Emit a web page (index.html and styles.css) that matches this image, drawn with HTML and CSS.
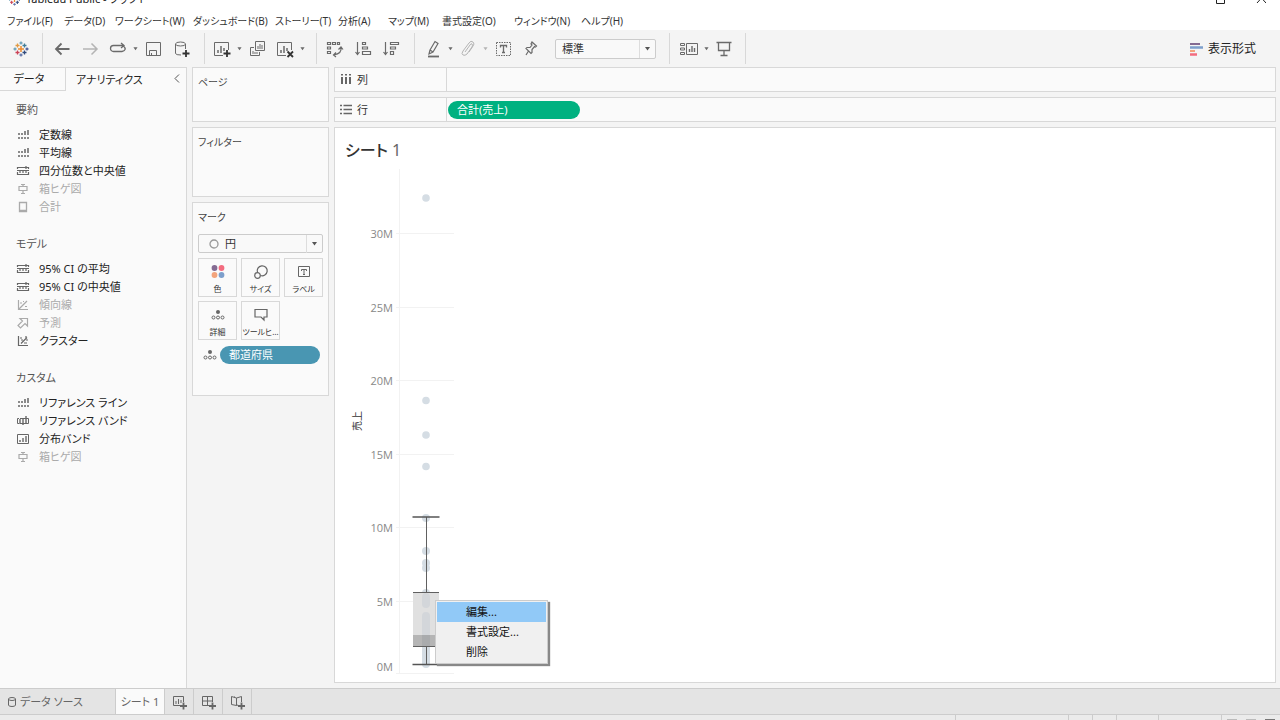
FILE: index.html
```html
<!DOCTYPE html>
<html lang="ja">
<head>
<meta charset="utf-8">
<title>Tableau Public - ブック1</title>
<link rel="stylesheet" href="styles.css">
</head>
<body>
<svg class="sprite" aria-hidden="true">
  <symbol id="line" viewBox="0 0 14 12"><path d="M3 4v2M3 8v2M6 4v2M6 8v2M9 2v4M9 8v2M12 1v5M12 8v2" stroke="currentColor" stroke-width="1.500"/></symbol>
  <symbol id="band" viewBox="0 0 14 12"><path d="M1.500 4V2.500H12.500V4M1 5.500H13M1.500 7v2.500H12.500V7M4 5v3M7 5v3M10 1v3M10 6v2" fill="none" stroke="currentColor" stroke-width="1.200"/></symbol>
  <symbol id="refband" viewBox="0 0 14 12"><path d="M3 3.500H1.500V8.500H3M11 3.500h1.500V8.500H11M4 3.500h7M4 8.500h7" fill="none" stroke="currentColor"/><path d="M4 4v5M7 3v7M10 1v8" stroke="currentColor" stroke-width="1.400"/></symbol>
  <symbol id="dist" viewBox="0 0 14 12"><path d="M1.500 1.500h11v9h-11z" fill="none" stroke="currentColor"/><path d="M4 7v2M7 5v4M10 3v6" stroke="currentColor" stroke-width="1.400"/></symbol>
  <symbol id="box" viewBox="0 0 14 12"><path d="M5 1.500h4M7 1.500v2M3 3.500h8v4H3zM7 7.500v3M5 10.500h4" fill="none" stroke="currentColor" stroke-width="1.200"/></symbol>
  <symbol id="total" viewBox="0 0 14 12"><path d="M3.500 1.500h7v9h-7zM3.500 9.500h7" fill="none" stroke="currentColor" stroke-width="1.300"/></symbol>
  <symbol id="trend" viewBox="0 0 14 12"><path d="M2.500 1v9.500H12M3 10 11 2M4 4h2M9 7.500h2M7 2.500h1" fill="none" stroke="currentColor" stroke-width="1.200"/></symbol>
  <symbol id="forecast" viewBox="0 0 14 12"><path d="M4 1.500h7.500V9L9 6.500 4.500 11 2 8.500 6.500 4z" fill="none" stroke="currentColor" stroke-width="1.200"/></symbol>
  <symbol id="cluster" viewBox="0 0 14 12"><path d="M2.500 1v9.500H12M4 3h2M5 5h2M5 8.500l6-6M8 8h3M10 5h2M10 1v2" fill="none" stroke="currentColor" stroke-width="1.200"/></symbol>
  <symbol id="detail" viewBox="0 0 14 12"><circle cx="7" cy="3" r="2" fill="currentColor"/><g fill="none" stroke="currentColor"><circle cx="2.500" cy="8.500" r="1.500"/><circle cx="7" cy="8.500" r="1.500"/><circle cx="11.500" cy="8.500" r="1.500"/></g></symbol>
  <symbol id="caret" viewBox="0 0 6 4"><path d="M.5 0h5L3 3.500z" fill="currentColor"/></symbol>
  <symbol id="logo" viewBox="0 0 16 16"><g fill="none" stroke-width="1.300"><path d="M8 5v6M5 8h6" stroke="#ec8a2c" stroke-width="1.500"/><path d="M8 .5v3M6.500 2h3" stroke="#6aa0b8"/><path d="M8 12.500v3M6.500 14h3" stroke="#6173a8"/><path d="M.5 8h3M2 6.500v3" stroke="#6aa0b8"/><path d="M12.500 8h3M14 6.500v3" stroke="#4c5d99"/><path d="M4.500 2.500v4M2.500 4.500h4" stroke="#e09a45"/><path d="M11.500 2.500v4M9.500 4.500h4" stroke="#417d98"/><path d="M4.500 9.500v4M2.500 11.500h4" stroke="#cb4257"/><path d="M11.500 9.500v4M9.500 11.500h4" stroke="#314b7d"/></g></symbol>
</svg>

<div class="app">
  <header class="titlebar">
    <svg class="title-logo" width="13" height="13"><use href="#logo"/></svg>
    <span class="title-text">Tableau Public - ブック1</span>
    <svg class="window-controls" width="50" height="9" viewBox="0 0 50 9"><path d="M.5 0v8.500h8V0M41 8l4.500-5L50 8M45.500 3V0" fill="none" stroke="#222"/></svg>
  </header>
  <nav class="menubar">
    <button>ファイル(F)</button><button>データ(D)</button><button>ワークシート(W)</button><button>ダッシュボード(B)</button><button>ストーリー(T)</button><button>分析(A)</button><button>マップ(M)</button><button>書式設定(O)</button><button>ウィンドウ(N)</button><button>ヘルプ(H)</button>
  </nav>

  <div class="toolbar">
    <div class="group brand"><svg width="16" height="16"><use href="#logo"/></svg></div>
    <div class="group history">
      <button class="tool" aria-label="元に戻す"><svg width="18" height="18" viewBox="0 0 18 18"><path d="M16.500 9H3M8.500 3.500 3 9l5.500 5.500" stroke-width="1.800"/></svg></button>
      <button class="tool off" aria-label="やり直し"><svg width="18" height="18" viewBox="0 0 18 18"><path d="M2 9h14M10.500 3.500 16 9l-5.500 5.500" stroke-width="1.500"/></svg></button>
      <button class="tool" aria-label="繰り返し"><svg width="18" height="18" viewBox="0 0 18 18"><path d="M13 11.500H4.500a3 3 0 0 1 0-6H14M12 3l3 2.500L12 8M14.500 6q4 4-1.500 5.500" stroke-width="1.300"/></svg></button>
      <button class="caret" aria-label="履歴"><svg width="5" height="4"><use href="#caret"/></svg></button>
      <button class="tool" aria-label="保存"><svg width="18" height="18" viewBox="0 0 18 18"><path d="M2.500 2.500h14v13h-14zM5.500 15v-4.500h7V15M7.500 13v2"/></svg></button>
      <button class="tool" aria-label="新しいデータソース"><svg width="18" height="18" viewBox="0 0 18 18"><path d="M3.500 4v9.500Q4 15 9 15M13.500 4v5"/><ellipse cx="8.500" cy="4" rx="5" ry="2"/><path class="dark" d="M14 10v7M10.500 13.500h7" stroke-width="1.800"/></svg></button>
    </div>
    <div class="group sheets">
      <button class="tool" aria-label="新しいワークシート"><svg width="18" height="18" viewBox="0 0 18 18"><path d="M10 15.500H1.500v-13h14V10"/><path d="M5 10v3M8 6v7M11 8v3" stroke-width="1.500"/><path class="dark" d="M14 10v7M10.500 13.500h7" stroke-width="1.800"/></svg></button>
      <button class="caret" aria-label="新規メニュー"><svg width="5" height="4"><use href="#caret"/></svg></button>
      <button class="tool" aria-label="複製"><svg width="18" height="18" viewBox="0 0 18 18"><path d="M7.500 1.500h9v9h-9zM10 6v3M12 4v5M14 5v4M6 7.500H2.500v8h9V12M5 11v3M7 12v2M9 12v2"/></svg></button>
      <button class="tool" aria-label="クリア"><svg width="18" height="18" viewBox="0 0 18 18"><path d="M10 15.500H1.500v-13h14V10"/><path d="M5 10v3M8 6v7M11 8v3" stroke-width="1.500"/><path class="dark" d="m11.500 11.500 5.500 5.500m0-5.500L11.500 17" stroke-width="1.800"/></svg></button>
      <button class="caret" aria-label="クリアメニュー"><svg width="5" height="4"><use href="#caret"/></svg></button>
    </div>
    <div class="group sorting">
      <button class="tool" aria-label="行と列の交換"><svg width="18" height="18" viewBox="0 0 18 18"><path d="M1.500 2.500h3v2h-3zM6.500 2.500h3v2h-3zM11.500 2.500h2v2h-2zM1.500 7h3v2h-3zM1.500 11.500h3v2h-3zM15 7.500q1 6-7 7.500M12.500 9.500 15 7l2 2.500M10 12.500 7.500 15l2.500 2" stroke-width="1.200"/></svg></button>
      <button class="tool" aria-label="昇順"><svg width="18" height="18" viewBox="0 0 18 18"><path d="M3.500 2v12M1.500 12l2 2.500 2-2.500M8.500 2.500h3v2h-3zM8.500 7h5v2h-5zM8.500 11.500h8v3h-8z" stroke-width="1.200"/></svg></button>
      <button class="tool" aria-label="降順"><svg width="18" height="18" viewBox="0 0 18 18"><path d="M3.500 2v12M1.500 12l2 2.500 2-2.500M8.500 2.500h8v2h-8zM8.500 7h5v2h-5zM8.500 11.500h3v3h-3z" stroke-width="1.200"/></svg></button>
    </div>
    <div class="group format">
      <button class="tool" aria-label="ハイライト"><svg width="18" height="18" viewBox="0 0 18 18"><path d="m6 10 5-8.500 3 2L9 12l-4 2zM6 10l3 2" stroke-width="1.200"/><path d="M4 16.500h11" stroke-width="1.800"/></svg></button>
      <button class="caret" aria-label="ハイライトメニュー"><svg width="5" height="4"><use href="#caret"/></svg></button>
      <button class="tool off" aria-label="グループ"><svg width="18" height="18" viewBox="0 0 18 18"><path d="m6 12 5-7q1-2 2-1t0 3l-5 7q-2 2-4 1t0-4l6-8q2-3 4-1t0 4l-4 6"/></svg></button>
      <button class="caret off" aria-label="グループメニュー"><svg width="5" height="4"><use href="#caret"/></svg></button>
      <button class="tool" aria-label="マーク ラベル"><svg width="18" height="18" viewBox="0 0 18 18"><path d="M2.500 2.500h14v13h-14z" stroke-dasharray="1.500 1"/><path d="M6.500 7.500v-2h6v2M9.500 5.500v7M8 12.500h3" stroke-width="1.300"/></svg></button>
      <button class="tool" aria-label="固定"><svg width="18" height="18" viewBox="0 0 18 18"><path d="m10 2 4.500 4-1 1-1-.5L10 9.500v3l-1 1-5-5 1-1h3l2-2.500-1-1zM6.500 11 4 15" stroke-width="1.200"/></svg></button>
      <div class="drop fit"><select aria-label="表示サイズ"><option>標準</option></select><svg width="7" height="5"><use href="#caret"/></svg></div>
    </div>
    <div class="group views">
      <button class="tool" aria-label="カードの表示"><svg width="20" height="18" viewBox="0 0 20 18"><path d="M1.500 3.500h4v2h-4zM1.500 8h4v2h-4zM1.500 12.500h4v2h-4zM7.500 3.500h11v11h-11z"/><path d="M10.500 9v3M13 6v6M15.500 8v4" stroke-width="1.400"/></svg></button>
      <button class="caret" aria-label="カードメニュー"><svg width="5" height="4"><use href="#caret"/></svg></button>
      <button class="tool" aria-label="プレゼンテーション モード"><svg width="18" height="18" viewBox="0 0 18 18"><path d="M1.500 2.500h15M3.500 3v7.500h11V3M9 11v4.500M5.500 15.500h7" stroke-width="1.300"/></svg></button>
    </div>
    <button class="showme"><svg width="13" height="14" viewBox="0 0 13 14"><path d="M0 2h10" stroke="#846b92" stroke-width="2"/><path d="M0 5.500h13" stroke="#7d9fcc" stroke-width="2.500"/><path d="M0 9h5" stroke="#f3a47c" stroke-width="2"/><path d="M0 12.500h7" stroke="#f36c7f" stroke-width="2.500"/></svg>表示形式</button>
  </div>

  <div class="workspace">
    <aside class="sidebar">
      <div class="side-tabs"><button class="side-tab inactive">データ</button><button class="side-tab">アナリティクス</button><button class="collapse" aria-label="折りたたむ"><svg width="6" height="9" viewBox="0 0 6 9"><path d="M5 .5 1 4.500l4 4" fill="none" stroke="#555"/></svg></button></div>
      <div class="sections">
        <section><h2>要約</h2><ul>
          <li><svg><use href="#line"/></svg>定数線</li>
          <li><svg><use href="#line"/></svg>平均線</li>
          <li><svg><use href="#band"/></svg>四分位数と中央値</li>
          <li class="off"><svg><use href="#box"/></svg>箱ヒゲ図</li>
          <li class="off"><svg><use href="#total"/></svg>合計</li>
        </ul></section>
        <section><h2>モデル</h2><ul>
          <li><svg><use href="#band"/></svg>95% CI の平均</li>
          <li><svg><use href="#band"/></svg>95% CI の中央値</li>
          <li class="off"><svg><use href="#trend"/></svg>傾向線</li>
          <li class="off"><svg><use href="#forecast"/></svg>予測</li>
          <li><svg><use href="#cluster"/></svg>クラスター</li>
        </ul></section>
        <section><h2>カスタム</h2><ul>
          <li><svg><use href="#line"/></svg>リファレンス ライン</li>
          <li><svg><use href="#refband"/></svg>リファレンス バンド</li>
          <li><svg><use href="#dist"/></svg>分布バンド</li>
          <li class="off"><svg><use href="#box"/></svg>箱ヒゲ図</li>
        </ul></section>
      </div>
    </aside>

    <div class="cards">
      <section class="card pages"><h3>ページ</h3></section>
      <section class="card filters"><h3>フィルター</h3></section>
      <section class="card marks"><h3>マーク</h3>
        <div class="drop mark-type"><svg class="ring" width="10" height="10" viewBox="0 0 10 10"><circle cx="5" cy="5" r="4" fill="none" stroke="#999" stroke-width="1.300"/></svg><select aria-label="マークの種類"><option>円</option></select><svg width="7" height="5"><use href="#caret"/></svg></div>
        <div class="mark-grid">
          <button><svg width="16" height="16" viewBox="0 0 16 16"><circle cx="4.500" cy="4" r="2.900" fill="#846b92"/><circle cx="11.500" cy="4" r="2.900" fill="#f36c7f"/><circle cx="4.500" cy="11" r="2.900" fill="#f3a47c"/><circle cx="11.500" cy="11" r="2.900" fill="#7d9fcc"/></svg>色</button>
          <button><svg width="16" height="16" viewBox="0 0 16 16" fill="none" stroke="#666" stroke-width="1.200"><path d="M4.500 8.500a5 5 0 1 1 3 3"/><circle cx="4.500" cy="11.500" r="2.800"/></svg>サイズ</button>
          <button><svg width="16" height="16" viewBox="0 0 16 16" fill="none" stroke="#666"><path d="M2.500 2.500h11v10h-11zM5.500 7V5.500h5V7M8 5.500v5M7 10.500h2"/></svg>ラベル</button>
          <button><svg width="14" height="16" viewBox="0 -2 14 16"><use href="#detail" width="14" height="12"/></svg>詳細</button>
          <button><svg width="16" height="16" viewBox="0 0 16 16" fill="none" stroke="#666" stroke-width="1.200"><path d="M2 2.500h12v7.500h-3v3l-3-3H2z"/></svg>ツールヒ…</button>
        </div>
        <div class="mark-field"><svg width="14" height="12"><use href="#detail"/></svg><button class="pill blue">都道府県</button></div>
      </section>
    </div>

    <main class="canvas">
      <div class="shelf"><div class="shelf-name"><svg width="12" height="12" viewBox="0 0 12 12"><path d="M2 0v1.500M6 0v1.500M10 0v1.500M2 3v7M6 3v7M10 3v7" stroke="#666" stroke-width="2"/></svg>列</div><div class="shelf-drop"></div></div>
      <div class="shelf"><div class="shelf-name"><svg width="12" height="12" viewBox="0 0 12 12"><path d="M0 1.500h2M0 5.500h2M0 9.500h2M3.500 1.500H12M3.500 5.500H12M3.500 9.500H12" stroke="#666" stroke-width="1.600"/></svg>行</div><div class="shelf-drop"><button class="pill green">合計(売上)</button></div></div>
      <div class="view">
        <h1><b>シート</b> 1</h1>
        <div class="chart">
          <svg width="130" height="512" viewBox="335 168 130 512" role="img" aria-label="売上の箱ヒゲ図">
            <path d="M399.500 169v505M396 233.500h58M396 307.500h58M396 380.500h58M396 454.500h58M396 527.500h58M396 601.500h58M396 673.500h58" stroke="#f2f2f2" fill="none"/>
            <g class="tick"><text x="393" y="238">30M</text><text x="393" y="312">25M</text><text x="393" y="385">20M</text><text x="393" y="459">15M</text><text x="393" y="532">10M</text><text x="393" y="606">5M</text><text x="393" y="671">0M</text></g>
            <text class="axis" transform="rotate(-90 361 421)" x="361" y="421">売上</text>
            <g fill="#d5dde4"><circle cx="426" cy="198" r="3.800"/><circle cx="426" cy="400.500" r="3.800"/><circle cx="426" cy="435" r="3.800"/><circle cx="426" cy="466.500" r="3.800"/><circle cx="426" cy="518" r="4"/><circle cx="426" cy="551" r="4"/><circle cx="426" cy="563" r="4"/><circle cx="426" cy="568" r="4"/><circle cx="426" cy="593" r="4"/></g>
            <path d="M426 646v18" stroke="#d5dde4" stroke-width="8" stroke-linecap="round"/>
            <path d="M413 592h26v44h-26z" fill="#e0e0e0"/><path d="M413 635h26v11h-26z" fill="#b5b5b5"/>
            <path d="M426 597v7M426 616v17" stroke="#d3d6da" stroke-width="8" stroke-linecap="round"/><path d="M426 635v11" stroke="#a9abad" stroke-width="8"/>
            <path d="M426.500 517v75M426.500 646v18M413 592.500h26M413 646.500h26" stroke="#606060" fill="none"/><path d="M412.500 517h27M412.500 664.500h27" stroke="#555" stroke-width="1.600"/>
          </svg>
          <div class="context-menu" role="menu"><button class="selected" role="menuitem">編集...</button><button role="menuitem">書式設定...</button><button role="menuitem">削除</button></div>
        </div>
      </div>
    </main>
  </div>

  <footer>
    <div class="sheet-tabs">
      <button class="source"><svg width="10" height="12" viewBox="0 0 10 12" fill="none" stroke="#666"><path d="M1.500 3v6q0 1.500 3.500 1.500T8.500 9V3M1.500 3q0 1.500 3.500 1.500T8.500 3 5 1.500 1.500 3"/></svg>データ ソース</button>
      <button class="current">シート 1</button>
      <button class="add" aria-label="新しいワークシート"><svg width="16" height="16" viewBox="0 0 16 16"><path d="M9 11.500H2.500v-9h10V8M5 7v3M7.500 5v5M10 6v3"/><path d="M12.500 8.500v7M9 12h7" stroke-width="1.800"/></svg></button>
      <button class="add" aria-label="新しいダッシュボード"><svg width="16" height="16" viewBox="0 0 16 16"><path d="M9 11.500H2.500v-9h10V8M7.500 2.500v9M2.500 7h10"/><path d="M12.500 8.500v7M9 12h7" stroke-width="1.800"/></svg></button>
      <button class="add" aria-label="新しいストーリー"><svg width="16" height="16" viewBox="0 0 16 16"><path d="m9 11-1.500.5-5-1v-8l5 1.500 5-1.500V8M7.500 4v7.500M5.500 2.500v1"/><path d="M12.500 8.500v7M9 12h7" stroke-width="1.800"/></svg></button>
    </div>
    <div class="status"><i></i><i></i><i></i><i></i><i></i><div class="view-modes"><b></b><b></b><b></b></div></div>
  </footer>
</div>
</body>
</html>
```
FILE: styles.css
```css
* { box-sizing: border-box; }
body { margin: 0; font-family: "Noto Sans", "Noto Sans CJK JP", sans-serif; font-size: 11px; line-height: 18px; font-feature-settings: "palt"; color: #333; background: #f4f4f4; }
button, select { font: inherit; font-feature-settings: inherit; color: inherit; border: 0; background: none; padding: 0; margin: 0; white-space: nowrap; }
svg { display: block; flex: none; }
h1, h2, h3, ul { margin: 0; padding: 0; font-size: inherit; font-weight: 400; list-style: none; }
.sprite { position: absolute; width: 0; height: 0; }
.app { display: flex; flex-direction: column; height: 100vh; overflow: hidden; }

.titlebar { display: flex; align-items: flex-end; height: 8px; flex: none; padding: 0 14px 0 8px; background: #fff; overflow: hidden; color: #222; }
.title-logo { margin-right: 5px; margin-bottom: 2px; }
.title-text { flex: 1; }
.window-controls { margin-bottom: 4px; }
.menubar { display: grid; grid-template-columns: 57px 51px 78px 82px 63px 50px 54px 72px 67px 50px; height: 22px; padding: 3px 7px 0; background: #fff; flex: none; }
.menubar button { text-align: left; font-size: 10px; line-height: 18px; }

.toolbar { display: flex; align-items: center; height: 37px; flex: none; color: #6a6a6a; }
.group { display: flex; align-items: center; height: 31px; border-right: 1px solid #d8d8d8; }
.brand { width: 43px; padding-left: 13px; }
.history { width: 162px; padding-left: 5px; }
.sheets { width: 112px; padding-left: 3px; }
.sorting { width: 98px; padding-left: 4px; }
.format { width: 255px; padding-left: 4px; }
.views { width: 76px; padding-left: 5px; }
.tool { display: flex; justify-content: center; width: 28px; }
.tool svg, .add svg { fill: none; stroke: currentColor; }
.tool .dark { stroke: #333; }
.caret { display: flex; justify-content: center; width: 7px; }
.off { color: #b4b4b4; }
.showme { display: flex; align-items: center; gap: 5px; margin: 0 24px 0 auto; font-size: 12px; color: #222; }
.drop { position: relative; display: flex; align-items: center; height: 20px; border: 1px solid #ccc; border-radius: 2px; background: #f9f9f9; color: #555; }
.drop select { appearance: none; flex: 1; align-self: stretch; padding-left: 6px; color: #333; outline: 0; }
.drop > svg:last-child { width: 16px; height: 18px; padding: 7px 4px; border-left: 1px solid #ddd; }
.fit { width: 101px; margin-left: 10px; }

.workspace { display: flex; flex: 1; min-height: 0; }
.sidebar { width: 187px; flex: none; border: solid #d8d8d8; border-width: 1px 1px 0 0; background: #fafafa; }
.side-tabs { display: flex; height: 23px; color: #222; }
.side-tab { padding: 0 10px; }
.side-tab.inactive { width: 66px; padding: 0 7px 0 0; border: solid #d8d8d8; border-width: 0 1px 1px 0; }
.collapse { display: flex; margin-left: auto; padding: 6px 6px 0 0; }
.sections { display: flex; flex-direction: column; gap: 19px; padding: 10px 16px; }
.sections h2 { margin-bottom: 7px; color: #555; }
.sections li { display: flex; align-items: center; gap: 9px; height: 18px; color: #222; }
.sections li svg { width: 14px; height: 12px; color: #666; }
.sections li.off, .sections li.off svg { color: #aaa; }

.cards { display: flex; flex-direction: column; gap: 5px; width: 137px; margin-left: 5px; flex: none; }
.card { border: 1px solid #d8d8d8; background: #fafafa; padding: 5px; }
.card h3 { color: #444; font-size: 10px; }
.pages { height: 55px; }
.filters { height: 70px; }
.marks { height: 194px; }
.mark-type { height: 19px; margin-top: 8px; padding-left: 10px; }
.mark-grid { display: grid; grid-template-columns: repeat(3, 1fr); gap: 4px; margin-top: 5px; }
.mark-grid button { display: flex; flex-direction: column; align-items: center; justify-content: space-between; height: 39px; padding: 5px 0 0; border: 1px solid #d8d8d8; font-size: 8px; line-height: 14px; overflow: hidden; color: #333; }
.mark-grid button svg { color: #666; }
.mark-field { display: flex; align-items: center; gap: 3px; margin-top: 6px; padding: 0 3px 0 5px; color: #666; }
.pill { height: 18px; padding: 0 9px; border-radius: 9px; text-align: left; color: #fff; }
.blue { flex: 1; background: #4996b2; }
.green { width: 132px; background: #00b180; }

.canvas { display: flex; flex-direction: column; flex: 1; gap: 5px; min-width: 0; margin: 0 4px 5px 5px; }
.shelf { display: flex; height: 25px; flex: none; border: 1px solid #d8d8d8; background: #fafafa; }
.shelf-name { display: flex; align-items: center; gap: 5px; width: 112px; padding-left: 5px; border-right: 1px solid #d8d8d8; }
.shelf-drop { display: flex; align-items: center; flex: 1; padding-left: 1px; }
.view { flex: 1; min-height: 0; border: 1px solid #d8d8d8; background: #fff; }
.view h1 { padding: 10px 10px 6px; font-size: 16px; line-height: 24px; color: #666; }
.view h1 b { font-weight: 500; color: #333; }
.chart { position: relative; }
.tick { font-family: "Open Sans", sans-serif; font-size: 11px; text-anchor: end; fill: #888; }
.axis { font-size: 10px; text-anchor: middle; fill: #333; }
.context-menu { position: absolute; left: 100px; top: 432px; display: flex; flex-direction: column; width: 113px; padding: 1px; border: 1px solid #ccc; background: #f0f0f0; box-shadow: 2px 2px 1px #888; }
.context-menu button { height: 20px; padding-left: 29px; text-align: left; color: #111; }
.context-menu .selected { background: #91c9f7; }

footer { flex: none; }
.sheet-tabs { display: flex; height: 27px; border: solid #ccc; border-width: 1px 0; background: #e4e4e4; color: #666; }
.sheet-tabs button { display: flex; align-items: center; border-right: 1px solid #ccc; }
.sheet-tabs .source { gap: 3px; width: 116px; padding-left: 7px; }
.sheet-tabs .current { width: 49px; justify-content: center; background: #fafafa; }
.sheet-tabs .add { width: 29px; justify-content: center; }
.status { display: flex; justify-content: flex-end; height: 5px; background: #ebebeb; }
.status i { border-left: 1px solid #ccc; width: 24px; }
.status i:first-child { width: 113px; }
.status i:nth-child(4) { width: 42px; }
.status i:nth-child(5) { width: 63px; }
.view-modes { display: flex; align-items: flex-end; justify-content: space-around; width: 59px; border-left: 1px solid #ccc; }
.view-modes b { width: 10px; height: 1px; background: #bbb; }
.view-modes b:last-child { background: #777; }
```
